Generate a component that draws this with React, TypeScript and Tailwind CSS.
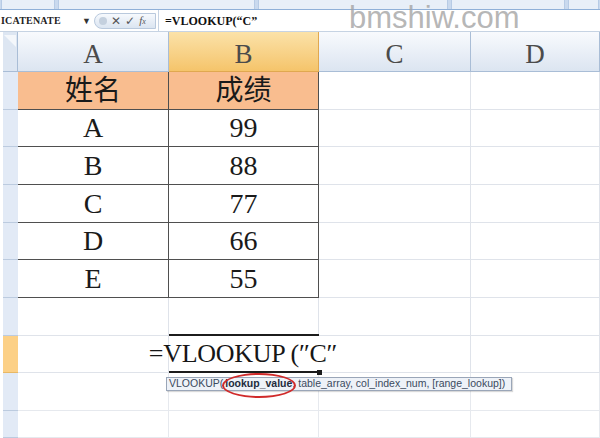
import React from 'react';

const serif = { fontFamily: '"Liberation Serif", "Noto Sans CJK SC", serif' };

const columns = ['A', 'B', 'C', 'D'];

// rows 1..10 of the sheet; only the first six carry table data
const tableRows: Array<[string, string]> = [
	['姓名', '成绩'],
	['A', '99'],
	['B', '88'],
	['C', '77'],
	['D', '66'],
	['E', '55'],
];

function Ribbon() {
	return (
		<div className="h-[10px] flex gap-[3px] bg-[#c9d9ee] border-b border-[#8fb0d8] px-[1px]">
			<div className="w-[54px] bg-[#e8eff8] border-x border-[#b7cbe5]" />
			<div className="w-[197px] bg-[#e8eff8] border-x border-[#b7cbe5]" />
			<div className="w-[190px] bg-[#e8eff8] border-x border-[#b7cbe5]" />
			<div className="w-[114px] bg-[#e8eff8] border-x border-[#b7cbe5]" />
			<div className="flex-1 bg-[#e8eff8] border-x border-[#b7cbe5]" />
		</div>
	);
}

function FormulaBar() {
	return (
		<div className="h-[22px] flex items-center bg-white border-b border-[#c6d3e3]">
			<div className="w-[82px] h-full flex items-center pl-[1px]">
				<span className="text-[10px] font-bold text-[#222] tracking-[0.2px]" style={serif}>
					ICATENATE
				</span>
			</div>
			<span className="w-[10px] text-[9px] text-[#333]">▼</span>
			<div className="ml-[2px] h-[16px] w-[62px] flex items-center gap-[4px] pl-[4px] rounded-l-full rounded-r-[3px] border border-[#b9c9dd] bg-gradient-to-b from-[#f6f9fd] to-[#dbe5f1]">
				<span className="w-[8px] h-[8px] rounded-full bg-[#c4d0de]" />
				<span className="text-[12px] leading-none text-[#555]" style={{ fontFamily: '"DejaVu Sans", sans-serif' }}>✕</span>
				<span className="text-[12px] leading-none text-[#555]" style={{ fontFamily: '"DejaVu Sans", sans-serif' }}>✓</span>
				<span className="text-[11px] leading-none italic text-[#555]" style={serif}>f<span className="text-[8px]">x</span></span>
			</div>
			<div className="flex-1 h-full flex items-center border-l border-[#c6d3e3] ml-[2px] pl-[6px]">
				<span className="text-[12px] font-bold text-[#111]" style={serif}>=VLOOKUP(“C”</span>
			</div>
		</div>
	);
}

function ColumnHeader({ label, active }: { label: string; active?: boolean }) {
	return (
		<div
			className={
				active
					? 'flex items-center justify-center pt-[5px] bg-gradient-to-b from-[#fbe2a8] to-[#f5c46a] border-r border-b border-[#e0a850]'
					: 'flex items-center justify-center pt-[5px] bg-gradient-to-b from-[#f8fafd] to-[#dce5f1] border-r border-b border-[#a9bdd6]'
			}
		>
			<span className="text-[27px] leading-none text-[#4b4b4b]" style={serif}>{label}</span>
		</div>
	);
}

function RowHeader({ active }: { active?: boolean }) {
	return (
		<div className={active ? 'bg-[#fcd086] border-b border-[#e8b865] ml-[3px]' : 'bg-[#e2eaf6] border-b border-[#bccbdf] ml-[3px]'} />
	);
}

function DataCell({ text, head }: { text: string; head?: boolean }) {
	return (
		<div
			className={
				'flex items-center justify-center border-r border-b border-[#4f4f4f] ' +
				(head ? 'bg-[#f9bd8f]' : 'bg-white')
			}
		>
			<span className="text-[28px] text-[#1a1a1a] leading-none" style={serif}>{text}</span>
		</div>
	);
}

function EmptyCell({ light }: { light?: boolean }) {
	return <div className={light ? 'border-r border-b border-[#e6e9ee]' : 'border-r border-b border-[#dfe3ea]'} />;
}

export default function App() {
	return (
		<div className="relative w-[600px] h-[438px] overflow-hidden bg-white">
			<Ribbon />
			<FormulaBar />

			<div className="grid grid-cols-[18px_151px_150px_152px_129px] grid-rows-[40px_38px_37px_38px_38px_37px_38px_38px_37px_38px_27px]">
				{/* select-all corner */}
				<div className="bg-[#dde6f2] border-r border-b border-[#a9bdd6] ml-[3px] relative">
					<svg width="12" height="12" className="absolute right-[1px] top-[3px]" viewBox="0 0 12 12">
						<polygon points="12,0 12,12 0,12" fill="#f4f7fb" transform="rotate(-90 6 6)" />
					</svg>
				</div>
				{columns.map(c => (
					<ColumnHeader key={c} label={c} active={c === 'B'} />
				))}

				{tableRows.map(([name, score], i) => (
					<React.Fragment key={i}>
						<RowHeader />
						<DataCell text={name} head={i === 0} />
						<DataCell text={score} head={i === 0} />
						<EmptyCell />
						<EmptyCell />
					</React.Fragment>
				))}

				{/* row 7 */}
				<RowHeader />
				<EmptyCell />
				<EmptyCell />
				<EmptyCell />
				<EmptyCell />

				{/* row 8: cell being edited */}
				<RowHeader active />
				<EmptyCell />
				<div className="flex items-center justify-end border-t-2 border-b-2 border-[#1c1c1c] -mt-[2px] relative">
					<span className="whitespace-nowrap text-[26px] text-[#161616] -mr-[18px] leading-none tracking-[-0.3px]" style={serif}>
						=VLOOKUP (″C″
					</span>
					<span className="absolute -right-[3px] -bottom-[4px] w-[5px] h-[5px] bg-[#1c1c1c]" />
				</div>
				<EmptyCell />
				<EmptyCell />

				{/* rows 9, 10 */}
				{[0, 1].map(k => (
					<React.Fragment key={k}>
						<RowHeader />
						<EmptyCell light />
						<EmptyCell light />
						<EmptyCell light />
						<EmptyCell light />
					</React.Fragment>
				))}
			</div>

			{/* site watermark */}
			<div
				className="absolute left-[349px] top-[2px] text-[31px] leading-none text-[#a3a3a3]/80"
				style={{ fontFamily: '"Liberation Sans", sans-serif' }}
			>
				bmshiw.com
			</div>

			{/* function argument tooltip */}
			<div
				className="absolute left-[166px] top-[377px] h-[14px] pl-[2px] pr-[6px] flex items-center bg-[#eef2f8] border border-[#9aa6b8] shadow-[1px_1px_1px_rgba(0,0,0,0.15)] text-[10.5px] text-[#3b4a5e] whitespace-nowrap"
				style={{ fontFamily: '"Liberation Sans", sans-serif' }}
			>
				<span>VLOOKUP(</span>
				<span className="font-bold text-[#1e2b3c] ml-[2px]">lookup_value</span>
				<span>, table_array, col_index_num, [range_lookup])</span>
			</div>
			<div className="absolute left-[222px] top-[373px] w-[74px] h-[25px] rounded-[50%] border-2 border-[#d02a2a]" />
		</div>
	);
}
